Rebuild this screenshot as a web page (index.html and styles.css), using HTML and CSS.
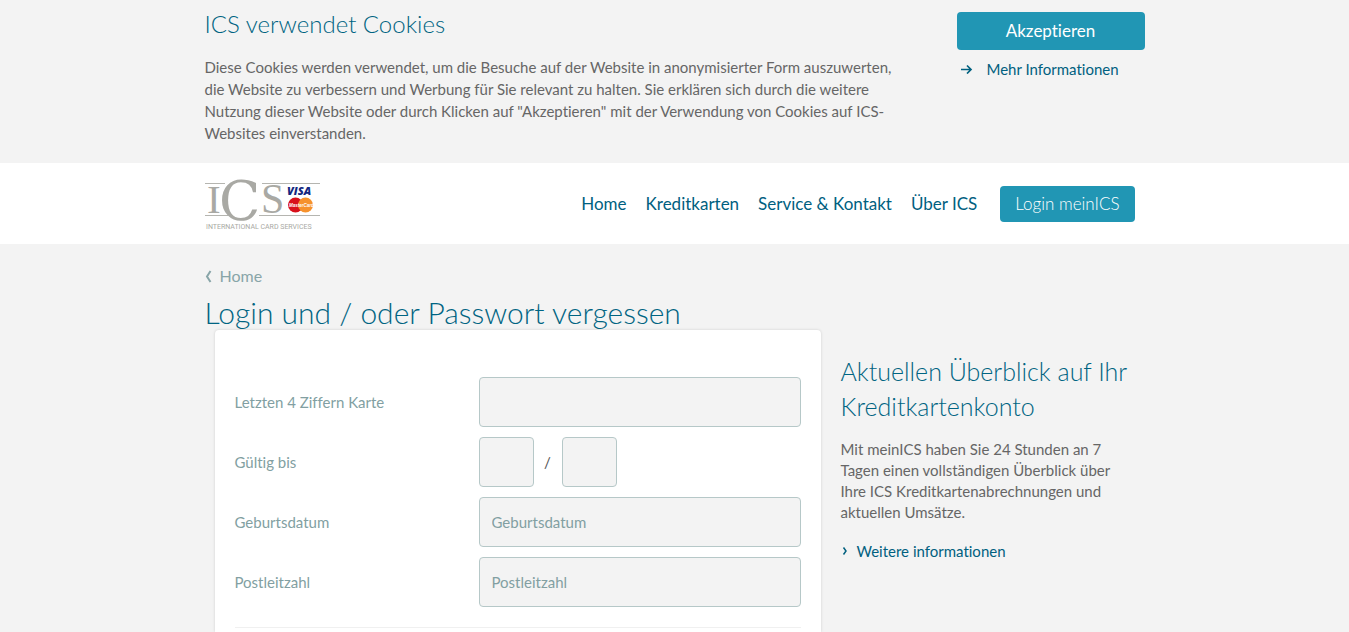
FILE: index.html
```html
<!DOCTYPE html>
<html lang="de">
<head>
<meta charset="utf-8">
<meta name="viewport" content="width=device-width, initial-scale=1">
<title>Login und / oder Passwort vergessen</title>
<link rel="stylesheet" href="styles.css">
</head>
<body>
<section class="cookies">
  <div class="container cookies-row">
    <div class="cookies-text">
      <h2 class="heading heading-small">ICS verwendet Cookies</h2>
      <p class="copy">Diese Cookies werden verwendet, um die Besuche auf der Website in anonymisierter Form auszuwerten, die Website zu verbessern und Werbung für Sie relevant zu halten. Sie erklären sich durch die weitere Nutzung dieser Website oder durch Klicken auf "Akzeptieren" mit der Verwendung von Cookies auf ICS-Websites einverstanden.</p>
    </div>
    <div class="cookies-actions">
      <button class="button button-accept" type="button">Akzeptieren</button>
      <a class="more" href="#info">
        <svg width="12" height="10" viewBox="0 0 12 10" aria-hidden="true"><path d="M0 5.500h10M6 1.500l4 4-4 4" fill="none" stroke="currentColor" stroke-width="1.700"/></svg>
        Mehr Informationen
      </a>
    </div>
  </div>
</section>
<header class="header">
  <div class="container header-row">
    <a class="logo" href="#home" aria-label="ICS International Card Services">
      <svg width="116" height="54" viewBox="0 0 116 54">
        <path d="M0 6.500h20M57 6.500h58M0 38.500h23M54 38.500h61" stroke="#b5b5b0" stroke-width="1"/>
        <g class="logo-letters">
          <text x="2" y="36" font-size="41">I</text>
          <text class="logo-c" x="14" y="43" font-size="54">C</text>
          <text x="56" y="36" font-size="42">S</text>
        </g>
        <text class="logo-visa" x="82" y="18" font-size="11">VISA</text>
        <circle cx="90.500" cy="28" r="7.500" fill="#d8101b"/>
        <circle cx="100.500" cy="28" r="7.500" fill="#f6922d"/>
        <text class="logo-mc" x="84" y="30" font-size="4.500">MasterCard</text>
        <text class="logo-sub" x="1" y="52" font-size="7">INTERNATIONAL CARD SERVICES</text>
      </svg>
    </a>
    <nav class="nav">
      <a href="#home">Home</a>
      <a href="#karten">Kreditkarten</a>
      <a href="#service">Service &amp; Kontakt</a>
      <a href="#ics">Über ICS</a>
      <a class="button button-login" href="#login">Login meinICS</a>
    </nav>
  </div>
</header>
<main class="container main">
  <a class="crumb" href="#home">
    <svg width="7" height="13" viewBox="0 0 7 13" aria-hidden="true"><path d="M5.500 1L2 6.500 5.500 12" fill="none" stroke="currentColor" stroke-width="2"/></svg>
    Home
  </a>
  <h1 class="title">Login und / oder Passwort vergessen</h1>
  <div class="columns">
    <form class="card">
      <div class="field">
        <label for="digits">Letzten 4 Ziffern Karte</label>
        <input class="input" id="digits" type="text">
      </div>
      <div class="field">
        <label for="month">Gültig bis</label>
        <div class="expiry">
          <input class="input input-short" id="month" type="text">
          <span>/</span>
          <input class="input input-short" id="year" type="text" aria-label="Gültig bis Jahr">
        </div>
      </div>
      <div class="field">
        <label for="birth">Geburtsdatum</label>
        <input class="input" id="birth" type="text" placeholder="Geburtsdatum">
      </div>
      <div class="field">
        <label for="zip">Postleitzahl</label>
        <input class="input" id="zip" type="text" placeholder="Postleitzahl">
      </div>
      <hr class="rule">
    </form>
    <aside class="side">
      <h2 class="heading">Aktuellen Überblick auf Ihr Kreditkartenkonto</h2>
      <p class="copy">Mit meinICS haben Sie 24 Stunden an 7 Tagen einen vollständigen Überblick über Ihre ICS Kreditkartenabrechnungen und aktuellen Umsätze.</p>
      <a class="side-link" href="#mehr">
        <svg width="8" height="8" viewBox="0 0 8 8" aria-hidden="true"><path d="M2.500 0.500L5 4 2.500 7.500" fill="none" stroke="currentColor" stroke-width="1.500"/></svg>
        Weitere informationen
      </a>
    </aside>
  </div>
</main>
</body>
</html>
```
FILE: styles.css
```css
* { box-sizing: border-box; }
body {
  margin: 0;
  min-height: 100vh;
  display: flex;
  flex-direction: column;
  background: #f3f3f3;
  color: #666;
  font: 15px/22px Lato, sans-serif;
  font-variant-ligatures: none;
}
a { color: #00607f; text-decoration: none; }
h1, h2, p { margin: 0; }
.container { width: 100%; max-width: 940px; margin: 0 auto; }
.heading { color: #006482; font-size: 25px; line-height: 35px; font-weight: 300; }
.heading-small { font-size: 24px; }
.cookies { padding: 6px 0 19px; }
.cookies-row { display: flex; justify-content: space-between; align-items: flex-start; }
.cookies-text { flex: 0 1 700px; }
.cookies-text .copy { margin-top: 15px; }
.cookies-actions { width: 188px; padding-top: 6px; }
.button { border: 0; border-radius: 4px; background: #2196b4; color: #fff; font: 17px/36px Lato, sans-serif; font-variant-ligatures: none; cursor: pointer; }
.button-accept { display: block; width: 100%; height: 38px; }
.more { display: flex; align-items: center; gap: 14px; padding: 8px 4px; }
.header { background: #fff; }
.header-row { display: flex; justify-content: space-between; align-items: center; height: 81px; padding-right: 10px; }
.logo svg { display: block; overflow: visible; }
.logo-letters { fill: #a9a9a4; font-family: "Liberation Serif", serif; }
.logo-c { font-family: "DejaVu Serif", serif; }
.logo-visa { fill: #12277f; font-family: "Open Sans", sans-serif; font-weight: 800; font-style: italic; }
.logo-mc { fill: #fff; font-family: "Liberation Sans", sans-serif; font-weight: 700; font-style: italic; }
.logo-sub { fill: #a9a9a4; font-family: Roboto, sans-serif; }
.nav { display: flex; align-items: center; gap: 19px; font-size: 17px; }
.nav .button-login { margin-left: 4px; padding: 0 15px; color: #fff; font-weight: 300; }
.main { flex: 1; display: flex; flex-direction: column; padding-top: 21px; }
.crumb { align-self: flex-start; display: flex; align-items: center; gap: 8px; color: #88a5a8; font-size: 16px; }
.title { height: 43px; color: #006482; font-size: 30px; line-height: 50px; font-weight: 300; }
.columns { flex: 1; display: flex; gap: 20px; padding-left: 10px; }
.card { position: relative; flex: 1; padding: 47px 20px 0; background: #fff; border-radius: 4px 4px 0 0; box-shadow: 0 0 3px rgba(0, 0, 0, 0.15); }
.field { display: flex; align-items: center; justify-content: space-between; margin-bottom: 10px; color: #829fa2; }
.input { width: 322px; height: 50px; padding: 0 12px; border: 1px solid #b6c8c8; border-radius: 4px; background: #f3f3f3; color: #666; font: 15px/22px Lato, sans-serif; font-variant-ligatures: none; }
.input::placeholder { color: #829fa2; opacity: 1; }
.expiry { display: flex; align-items: center; width: 322px; color: #555; }
.expiry span { width: 28px; text-align: center; }
.input-short { width: 55px; }
.rule { margin: 20px 0 0; border: 0; border-top: 1px solid #f0f0f0; }
.side { width: 304px; padding: 24px 16px 0 0; }
.side .copy { margin-top: 15px; line-height: 21px; }
.side-link { display: flex; align-items: center; gap: 8px; margin-top: 17px; }
```
